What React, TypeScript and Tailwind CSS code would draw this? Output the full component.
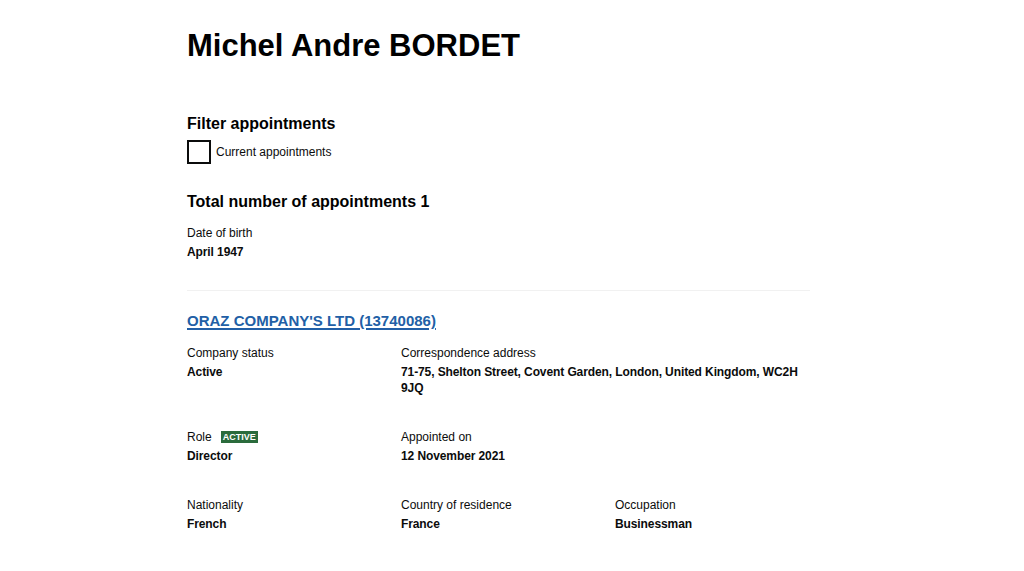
import React from "react";

const Field = ({ label, value, tag, className = "" }: { label: string; value: React.ReactNode; tag?: string; className?: string }) => (
  <div className={className}>
    <div className="flex items-center text-[12px] leading-[16px]">
      <span>{label}</span>
      {tag && (
        <span className="ml-[9px] bg-[#2a6b3c] px-[2px] text-[9px] font-bold leading-[12px] text-white">
          {tag}
        </span>
      )}
    </div>
    <div className="mt-[3px] text-[12px] font-bold leading-[16px] tracking-[-0.1px]">{value}</div>
  </div>
);

export default function App() {
  return (
    <div className="min-h-[571px] w-full bg-white text-[#0b0c0c]" style={{ fontFamily: '"Liberation Sans", Arial, sans-serif' }}>
      <div className="ml-[187px] w-[623px] pt-[26px]">
        <h1 className="text-[31px] font-bold leading-[40px] text-black">Michel Andre BORDET</h1>

        <h2 className="mt-[48px] text-[16px] font-bold leading-[20px] text-black">Filter appointments</h2>
        <div className="mt-[6px] flex items-center">
          <div className="h-[24px] w-[24px] border-2 border-[#0b0c0c] bg-white" />
          <span className="ml-[5px] text-[12px] leading-[16px]">Current appointments</span>
        </div>

        <h2 className="mt-[28px] text-[16px] font-bold leading-[20px] text-black">Total number of appointments 1</h2>

        <div className="mt-[13px]">
          <Field label="Date of birth" value="April 1947" />
        </div>

        <div className="mt-[30px] h-px w-full bg-[#f1f1f1]" />

        <a href="#" className="mt-[20px] block text-[15px] font-bold leading-[20px] text-[#225fa6] underline decoration-[1.5px] underline-offset-2">
          ORAZ COMPANY'S LTD (13740086)
        </a>

        <div className="mt-[14px] grid grid-cols-[214px_214px_195px] gap-y-[33px]">
          <Field label="Company status" value="Active" />
          <Field
            className="col-span-2"
            label="Correspondence address"
            value={<span className="block max-w-[405px]">71-75, Shelton Street, Covent Garden, London, United Kingdom, WC2H 9JQ</span>}
          />
          <Field label="Role" tag="ACTIVE" value="Director" />
          <Field className="col-span-2" label="Appointed on" value="12 November 2021" />
          <Field label="Nationality" value="French" />
          <Field label="Country of residence" value="France" />
          <Field label="Occupation" value="Businessman" />
        </div>
      </div>
    </div>
  );
}
